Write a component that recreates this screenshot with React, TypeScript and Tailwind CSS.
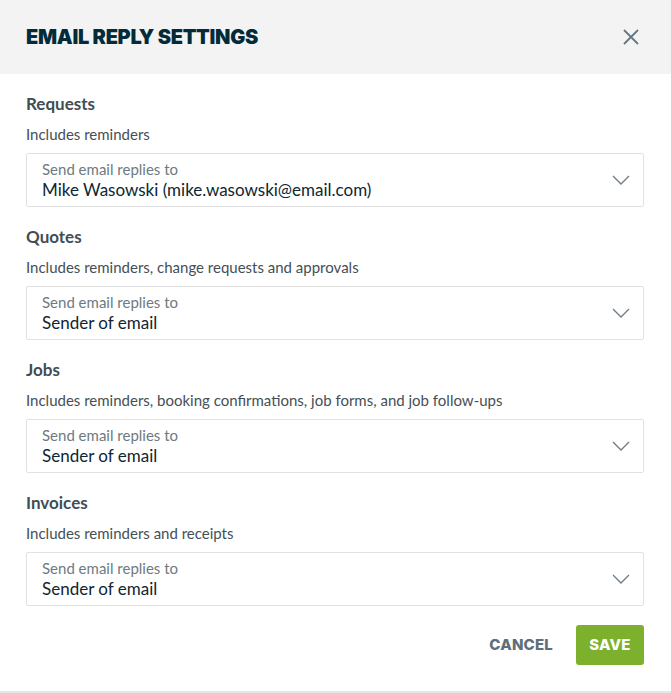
import React from "react";

const sections = [
  { title: "Requests", desc: "Includes reminders", value: "Mike Wasowski (mike.wasowski@email.com)" },
  { title: "Quotes", desc: "Includes reminders, change requests and approvals", value: "Sender of email" },
  { title: "Jobs", desc: "Includes reminders, booking confirmations, job forms, and job follow-ups", value: "Sender of email" },
  { title: "Invoices", desc: "Includes reminders and receipts", value: "Sender of email" },
];

function Chevron() {
  return (
    <svg width="18" height="10" viewBox="0 0 18 10" fill="none" className="shrink-0">
      <path d="M1 1 L9 9 L17 1" stroke="#6b7c88" strokeWidth="1.3" />
    </svg>
  );
}

export default function App() {
  return (
    <div className="w-[671px] h-[693px] bg-white flex flex-col font-['Lato',sans-serif]">
      <div className="h-[74px] shrink-0 bg-[#f3f3f3] flex items-center justify-between pl-[26px] pr-[32px]">
        <h1 className="font-['Inter',sans-serif] font-black text-[20px] tracking-[-0.3px] text-[#032b3a]">
          EMAIL REPLY SETTINGS
        </h1>
        <svg width="16" height="16" viewBox="0 0 16 16" fill="none">
          <path d="M1 1 L15 15 M15 1 L1 15" stroke="#667784" strokeWidth="1.8" />
        </svg>
      </div>
      <div className="flex flex-col pl-[26px] pr-[27px] pt-[18px]">
        {sections.map((s, i) => (
          <div key={s.title} className={i > 0 ? "mt-[18px]" : ""}>
            <div className="text-[17px] font-bold leading-[24px] text-[#424d55]">{s.title}</div>
            <div className="mt-[8px] text-[15px] leading-[20px] text-[#454f56]">{s.desc}</div>
            <div className="mt-[9px] h-[54px] border border-[#e2e2e2] rounded-[2px] flex items-center justify-between pl-[15px] pr-[13px]">
              <div className="flex flex-col">
                <span className="text-[15px] leading-[19px] text-[#6d7a82]">Send email replies to</span>
                <span className="text-[17px] leading-[22px] text-[#0e2633]">{s.value}</span>
              </div>
              <Chevron />
            </div>
          </div>
        ))}
        <div className="mt-[19px] flex justify-end items-center gap-[23px]">
          <span className="font-['Inter',sans-serif] font-extrabold text-[15px] text-[#5f6e78] tracking-[0.2px]">CANCEL</span>
          <button className="h-[40px] w-[68px] rounded-[3px] bg-[#7db02c] text-white font-['Inter',sans-serif] font-extrabold text-[15px] tracking-[0.2px]">
            SAVE
          </button>
        </div>
      </div>
      <div className="mt-auto h-[2px] bg-[#e6e6e6]" />
    </div>
  );
}
